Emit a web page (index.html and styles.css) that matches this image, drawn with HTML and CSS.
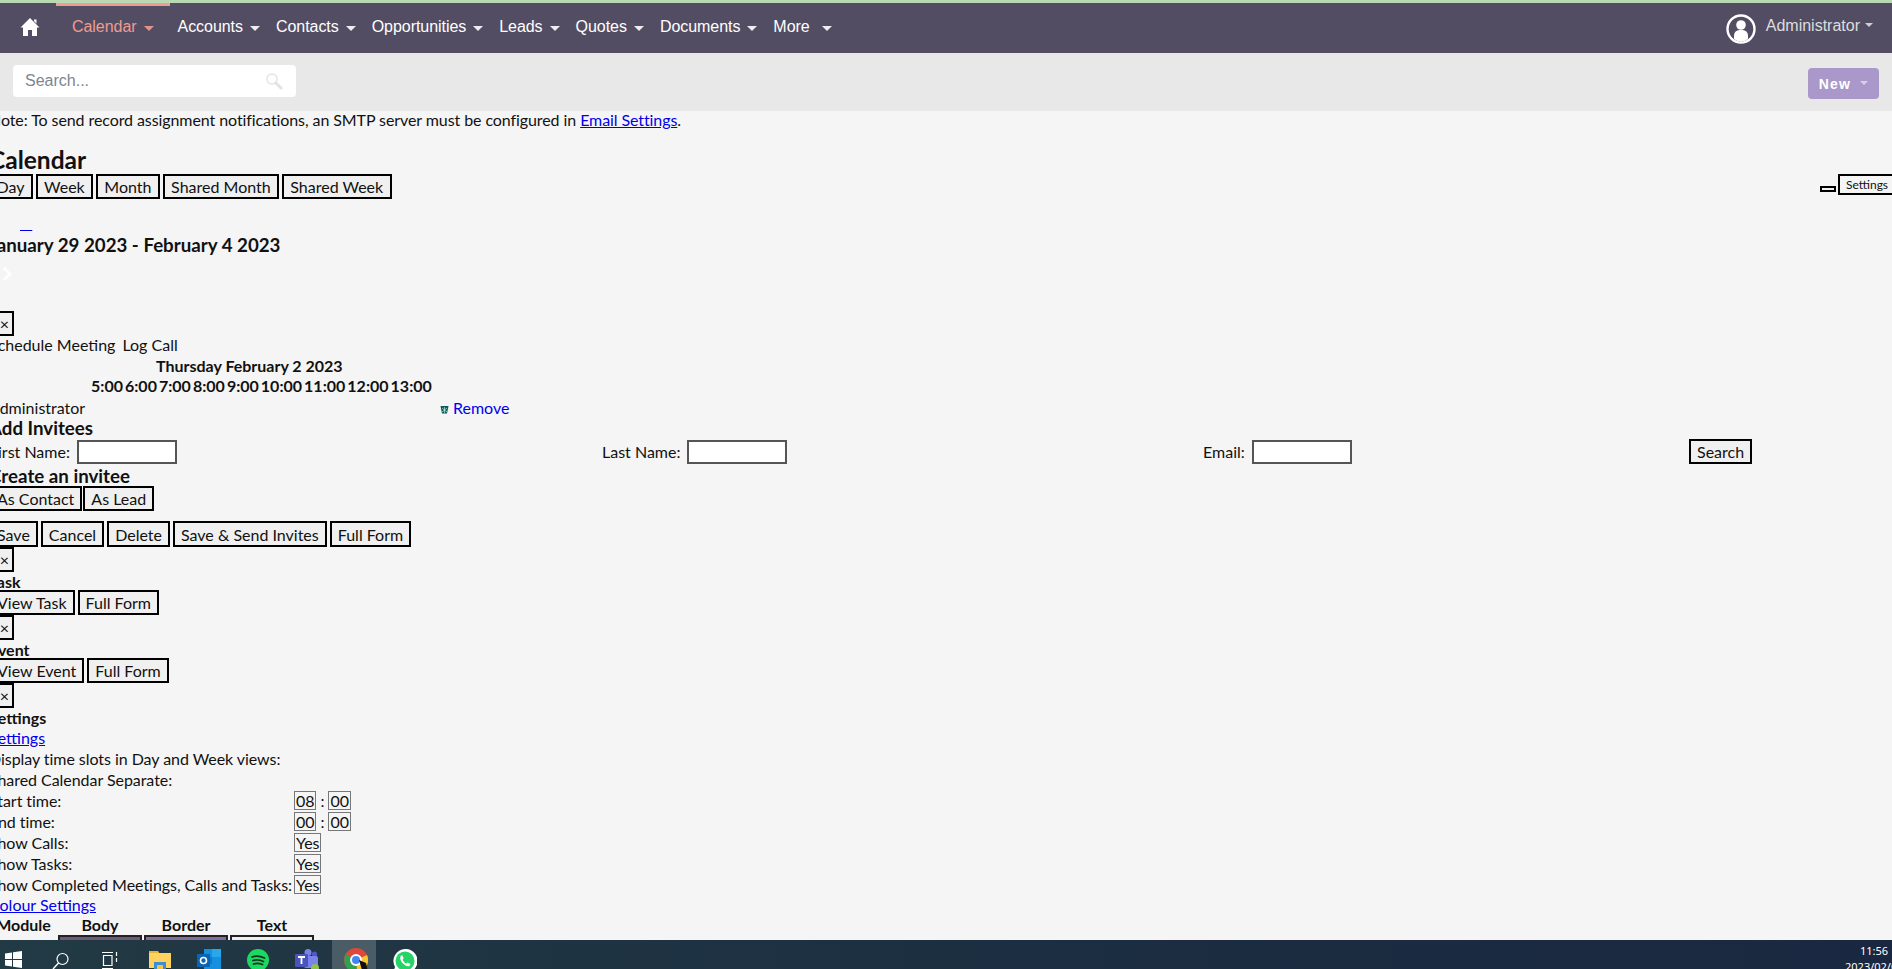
FILE: index.html
```html
<!DOCTYPE html>
<html lang="en">
<head>
<meta charset="utf-8">
<title>Calendar</title>
<link rel="stylesheet" href="styles.css">
</head>
<body>
<header class="nav">
  <a class="home" aria-label="Home"><svg width="20" height="20" viewBox="0 0 20 20"><path d="M10 1 L19.5 10.5 L17 10.5 L17 19 L12 19 L12 13 L8 13 L8 19 L3 19 L3 10.5 L0.5 10.5 Z M14 2.5 h2.5 v4 L14 4 Z" fill="#fff"/></svg></a>
  <ul class="menu">
    <li class="item active">Calendar<i class="caret"></i></li>
    <li class="item">Accounts<i class="caret"></i></li>
    <li class="item">Contacts<i class="caret"></i></li>
    <li class="item">Opportunities<i class="caret"></i></li>
    <li class="item">Leads<i class="caret"></i></li>
    <li class="item">Quotes<i class="caret"></i></li>
    <li class="item">Documents<i class="caret"></i></li>
    <li class="item">More<i class="caret more-caret"></i></li>
  </ul>
  <div class="user">
    <svg width="30" height="30" viewBox="0 0 30 30"><circle cx="15" cy="15" r="13.5" fill="none" stroke="#fff" stroke-width="2.4"/><circle cx="15" cy="11" r="4.8" fill="#fff"/><path d="M8 25 v-3.5 a5.5 5.5 0 0 1 5.5 -5.5 h3 a5.5 5.5 0 0 1 5.5 5.5 v3.5 a11 11 0 0 1 -14 0 Z" fill="#fff"/></svg>
    <span class="user-name">Administrator</span><i class="caret user-caret"></i>
  </div>
</header>
<div class="searchbar">
  <div class="search"><span class="placeholder">Search...</span>
    <svg width="18" height="18" viewBox="0 0 18 18"><circle cx="7" cy="7" r="5" fill="none" stroke="#e9e9e9" stroke-width="2"/><path d="M11 11 L16 16" stroke="#e2e2e2" stroke-width="3" stroke-linecap="round"/></svg>
  </div>
  <button class="new">New<i class="caret new-caret"></i></button>
</div>
<main class="page">
  <p class="note">Note: To send record assignment notifications, an SMTP server must be configured in <a href="#">Email Settings</a>.</p>
  <h1 class="title">Calendar</h1>
  <div class="views">
    <div class="btns"><button class="btn">Day</button><button class="btn">Week</button><button class="btn">Month</button><button class="btn">Shared Month</button><button class="btn">Shared Week</button></div>
    <div class="tools"><button class="btn tiny"></button><button class="btn settings">Settings</button></div>
  </div>
  <a href="#" class="stub">&nbsp;&nbsp;&nbsp;</a>
  <h2 class="range">January 29 2023 - February 4 2023</h2>
  <svg class="chev" width="10" height="14" viewBox="0 0 10 14"><path d="M2 1 L8 7 L2 13" fill="none" stroke="#fff" stroke-width="2.6"/></svg>

  <button class="btn close first">×</button>
  <div class="line actions"><span>Schedule Meeting</span><span>Log Call</span></div>
  <div class="line day">Thursday February 2 2023</div>
  <div class="line hours"><span>5:00</span><span>6:00</span><span>7:00</span><span>8:00</span><span>9:00</span><span>10:00</span><span>11:00</span><span>12:00</span><span>13:00</span></div>
  <div class="line invitee"><span class="inv-name">Administrator</span>
    <svg class="bin" width="9" height="9" viewBox="0 0 9 9"><path d="M0.5 1 H8.5 L7 8.5 H2 Z" fill="#0c5a55"/><path d="M2 3 L7 7 M7 3 L2 7 M4.5 2 V8" stroke="#dff" stroke-width=".6"/></svg>
    <a class="remove">Remove</a></div>
  <h3 class="sub">Add Invitees</h3>
  <div class="finder">
    <label class="field first-field">First Name:<span class="input"></span></label>
    <label class="field last-field">Last Name:<span class="input"></span></label>
    <label class="field mail-field">Email:<span class="input"></span></label>
    <button class="btn find">Search</button>
  </div>
  <h3 class="sub">Create an invitee</h3>
  <div class="row tight"><button class="btn">As Contact</button><button class="btn">As Lead</button></div>
  <div class="row save-row"><button class="btn">Save</button><button class="btn">Cancel</button><button class="btn">Delete</button><button class="btn">Save &amp; Send Invites</button><button class="btn">Full Form</button></div>
  <button class="btn close">×</button>
  <h4 class="label">Task</h4>
  <div class="row"><button class="btn">View Task</button><button class="btn">Full Form</button></div>
  <button class="btn close">×</button>
  <h4 class="label">Event</h4>
  <div class="row"><button class="btn">View Event</button><button class="btn">Full Form</button></div>
  <button class="btn close">×</button>
  <h4 class="label">Settings</h4>
  <a href="#" class="line block-link">Settings</a>
  <table class="opts">
    <tr><td>Display time slots in Day and Week views:</td><td></td></tr>
    <tr><td>Shared Calendar Separate:</td><td></td></tr>
    <tr><td>Start time:</td><td><span class="sel">08</span> : <span class="sel">00</span></td></tr>
    <tr><td>End time:</td><td><span class="sel">00</span> : <span class="sel">00</span></td></tr>
    <tr><td>Show Calls:</td><td><span class="sel">Yes</span></td></tr>
    <tr><td>Show Tasks:</td><td><span class="sel">Yes</span></td></tr>
    <tr><td>Show Completed Meetings, Calls and Tasks:</td><td><span class="sel">Yes</span></td></tr>
  </table>
  <a href="#" class="line block-link">Colour Settings</a>
  <table class="colours">
    <tr><th class="c-module">Module</th><th class="c-col">Body</th><th class="c-col">Border</th><th class="c-col">Text</th></tr>
    <tr><td></td><td><span class="swatch s-body"></span></td><td><span class="swatch s-border"></span></td><td><span class="swatch s-text"></span></td></tr>
  </table>
</main>
<footer class="taskbar">
  <svg class="ti t-win" width="17" height="17" viewBox="0 0 17 17"><path d="M0 2.4 L7 1.4 V8 H0 Z M8 1.2 L17 0 V8 H8 Z M0 9 H7 V15.6 L0 14.6 Z M8 9 H17 V17 L8 15.8 Z" fill="#fff"/></svg>
  <svg class="ti t-search" width="18" height="18" viewBox="0 0 18 18"><circle cx="10.5" cy="7" r="5.5" fill="none" stroke="#fff" stroke-width="1.2"/><path d="M6.5 11 L1 17" stroke="#fff" stroke-width="1.4"/></svg>
  <svg class="ti t-view" width="17" height="17" viewBox="0 0 17 17"><path d="M1 0.5 H12 M1 16.5 H12 M2.5 3.5 H11 V13.5 H2.5 Z M15.5 0 V4 M15.5 6 V10" fill="none" stroke="#fff" stroke-width="1.2"/></svg>
  <svg class="ti t-files" width="22" height="22" viewBox="0 0 22 22"><path d="M0 2 H9 L11 5 H0 Z" fill="#e8b33a"/><rect y="4" width="22" height="15" fill="#ffd25f"/><rect x="5" y="13" width="12" height="9" fill="#3a8fd0"/><rect x="8" y="16" width="6" height="6" fill="#f3c04a"/></svg>
  <svg class="ti t-outlook" width="24" height="22" viewBox="0 0 24 22"><rect x="7" y="0" width="17" height="22" fill="#1490df"/><rect x="15" y="0" width="9" height="8" fill="#28a8ea"/><rect x="7" y="8" width="8" height="7" fill="#0f78d4"/><rect x="0" y="5" width="13" height="13" fill="#0a64b4"/><circle cx="6.5" cy="11.5" r="3" fill="none" stroke="#fff" stroke-width="1.6"/></svg>
  <svg class="ti t-spotify" width="22" height="22" viewBox="0 0 22 22"><circle cx="11" cy="11" r="11" fill="#1ed760"/><path d="M5 8 Q11 6 17.5 9 M6 11.5 Q11 10 16.5 12.5 M6.5 15 Q11 13.5 15.5 15.5" fill="none" stroke="#12351f" stroke-width="1.8" stroke-linecap="round"/></svg>
  <svg class="ti t-teams" width="24" height="23" viewBox="0 0 24 23"><circle cx="13" cy="3.5" r="3.5" fill="#7b83eb"/><circle cx="19.5" cy="5" r="2.6" fill="#5059c9"/><rect x="9" y="7" width="14" height="12" rx="2" fill="#7b83eb"/><rect x="0" y="5" width="13" height="13" rx="1" fill="#4b53bc"/><path d="M3 8 H10 M6.5 8 V15" stroke="#fff" stroke-width="1.8"/><circle cx="20" cy="19" r="4" fill="#8fc04a"/></svg>
  <div class="ti t-active"><svg width="24" height="24" viewBox="0 0 24 24"><circle cx="12" cy="12" r="12" fill="#e0473a"/><path d="M12 12 L23 7 A12 12 0 0 1 13 24 Z" fill="#f7c531"/><path d="M12 12 L13 24 A12 12 0 0 1 2 6 Z" fill="#2fa24c"/><circle cx="12" cy="12" r="5" fill="#4285f4" stroke="#fff" stroke-width="2"/><path d="M15 12 L22 15 L24 24 L18 22 Z" fill="#111"/></svg></div>
  <svg class="ti t-wa" width="24" height="24" viewBox="0 0 24 24"><path d="M12 0 A12 12 0 1 1 6 22 L0 24 L2 18 A12 12 0 0 1 12 0 Z" fill="#fff"/><circle cx="12" cy="12" r="9.5" fill="#25d366"/><path d="M8 6.5 Q6 9 9 13.5 Q13 18 16.5 17 L17.5 15 L14.5 13.5 L13.2 14.8 Q10.5 13 9.5 10.8 L10.6 9.5 L9.5 6.5 Z" fill="#fff"/></svg>
  <div class="clock"><span class="c-time">11:56</span><span>2023/02/02</span></div>
</footer>
</body>
</html>
```

FILE: styles.css
```css
* { box-sizing: border-box; }
html, body { margin: 0; height: 969px; overflow: hidden; }
body { background: #f5f5f5; font-family: Lato, "Liberation Sans", sans-serif; font-size: 16px; color: #111; border-top: 3px solid #b9d8b4; }
a { color: #00e; }
a[href] { text-decoration: underline; }
p, h1, h2, h3, h4, ul { margin: 0; padding: 0; }

.nav { height: 50px; background: #534d64; display: flex; align-items: stretch; font-family: "Liberation Sans", Arial, sans-serif; font-size: 16px; color: #fff; }
.home { width: 56px; flex: none; display: flex; align-items: center; justify-content: center; padding: 0 0 2px 4px; }
.menu { list-style: none; display: flex; letter-spacing: -0.05px; }
.item { display: flex; align-items: center; padding: 0 8px 2px 8px; }
.item.active { color: #ee9c91; padding-left: 16px; padding-right: 16px; border-top: 3px solid #ee9c91; padding-bottom: 5px; }
.caret { display: inline-block; width: 0; height: 0; border-left: 5px solid transparent; border-right: 5px solid transparent; border-top: 5px solid currentColor; margin-left: 7px; margin-top: 2px; opacity: .9; }
.more-caret { margin-left: 12px; }
.user { margin-left: auto; display: flex; align-items: center; padding: 1px 19px 0 0; color: #ddd; }
.user-name { margin-left: 10px; margin-bottom: 5px; }
.user-caret { margin-left: 5px; margin-top: -7px; border-left-width: 4px; border-right-width: 4px; border-top-width: 4px; }

.searchbar { height: 58px; background: #e8e8e8; display: flex; align-items: flex-start; justify-content: space-between; padding: 12px 13px 0 13px; }
.search { width: 283px; height: 32px; background: #fff; border-radius: 4px; display: flex; align-items: center; justify-content: space-between; padding: 0 13px 0 12px; color: #7d8590; font-size: 16px; font-family: "Liberation Sans", Arial, sans-serif; }
.new { width: 71px; height: 31px; margin-top: 3px; border: 0; border-radius: 4px; background: #a998c9; color: #fff; font-family: "Liberation Sans", Arial, sans-serif; font-size: 14px; font-weight: 700; letter-spacing: 1.2px; padding: 0; }
.new-caret { margin-left: 9px; margin-top: 0; margin-bottom: 3px; border-left-width: 4px; border-right-width: 4px; border-top-width: 4px; opacity: .55; vertical-align: middle; }

.page { margin-left: -11px; line-height: 20px; letter-spacing: 0; }
.note { line-height: 20px; height: 20px; margin-top: -1px; letter-spacing: -0.085px; }
.title { font-size: 24.5px; font-weight: 700; line-height: 28px; margin-top: 16px; height: 28px; letter-spacing: 0; }
.btn { font: 16px/19px Lato, "Liberation Sans", sans-serif; letter-spacing: 0; color: #111; background: #f0f0f0; border: 2px solid #000; padding: 1px 6px; height: 25px; margin: 0 3px 0 0; display: inline-block; vertical-align: top; }
.views { display: flex; justify-content: space-between; height: 25px; }
.btns { margin-left: -1px; }
.btns .btn { padding-left: 6.5px; padding-right: 6.5px; margin-right: 2.6px; }
.tools { display: flex; align-items: flex-start; }
.tiny { width: 16px; height: 6px; padding: 0; margin: 12px 2px 0 0; }
.settings { font-size: 12px; line-height: 15px; height: 21px; width: 62px; margin: 0 -8px 0 0; background: #f5f5f5; padding: 0 0 0 6px; text-align: left; }
.stub { display: block; margin-left: 31px; height: 20px; margin-top: 14px; line-height: 20px; }
.range { font-size: 18.72px; font-weight: 700; line-height: 22px; margin-top: 1px; letter-spacing: 0; }
.chev { display: block; margin: 11px 0 0 13px; }
.close { display: block; width: 25px; padding: 0 0 0 6px; text-align: center; }
.first { margin-top: 30px; }
.line { display: block; line-height: 20px; }
.actions { display: flex; gap: 7px; margin-top: -1px; }
.day { font-weight: 700; padding-left: 167px; margin-top: 1px; letter-spacing: 0; }
.hours { font-weight: 700; padding-left: 102px; display: flex; gap: 2px; letter-spacing: 0; }
.invitee { display: flex; align-items: center; margin-top: 2px; }
.inv-name { width: 451px; }
.bin { margin-right: 4px; margin-top: 3px; }
.remove { color: #00e; }
.sub { font-size: 18.72px; font-weight: 700; line-height: 20px; letter-spacing: 0; }
.finder { display: flex; height: 27px; margin-top: 1px; align-items: flex-start; }
.field { display: flex; align-items: center; height: 25px; }
.input { display: block; width: 100px; height: 24px; background: #fff; border: 2px solid #555; margin-left: 7px; }
.first-field { width: 613px; }
.last-field { width: 601px; }
.mail-field { width: 486px; }
.find { margin-top: 0; }
.row { display: block; height: 25px; }
.tight .btn { margin-right: 1px; }
.save-row { margin-top: 10px; height: 26px; }
.save-row .btn { height: 26px; margin-right: 3px; padding-top: 2px; }
.label { font-size: 16px; font-weight: 700; line-height: 20px; letter-spacing: 0; }
.label + .row { margin-top: -2px; }
.opts { border-collapse: collapse; margin-top: 0; letter-spacing: -0.05px; }
.opts td { padding: 0 2px 0 0; height: 21px; line-height: 19px; white-space: nowrap; }
.sel { display: inline-block; border: 1px solid #777; height: 19px; line-height: 18px; padding: 0 1px; font-size: 16px; min-width: 21px; }
.colours { border-collapse: separate; border-spacing: 2px 0; margin-top: 0; }
.colours th { font-size: 16px; line-height: 20px; padding: 0; letter-spacing: 0; }
.c-module { width: 65px; }
.c-col { width: 84px; }
.colours td { padding: 0; }
.swatch { display: block; height: 24px; border: 2px solid #222; }
.s-body { background: #6b5b78; }
.s-border { background: #846c9c; }
.s-text { background: #eee; }

.taskbar { position: fixed; left: 0; right: 0; bottom: 0; height: 29px; overflow: hidden; background: linear-gradient(90deg, #223a44 0%, #1b2d41 60%, #1a2740 100%); color: #fff; }
.ti { position: absolute; top: 11px; }
.t-win { left: 5px; }
.t-search { left: 52px; top: 12px; }
.t-view { left: 101px; top: 12px; }
.t-files { left: 149px; top: 9px; }
.t-outlook { left: 197px; top: 9px; }
.t-spotify { left: 247px; top: 9px; }
.t-teams { left: 295px; top: 9px; }
.t-active { left: 332px; top: 0; width: 44px; height: 29px; background: #4a5c66; padding: 8px 0 0 12px; }
.t-wa { left: 393px; top: 9px; }
.clock { position: absolute; left: 1845px; top: 3px; display: flex; flex-direction: column; font: 11px/16px "Noto Sans", "Liberation Sans", sans-serif; white-space: nowrap; }
.c-time { padding-left: 15px; }
```
